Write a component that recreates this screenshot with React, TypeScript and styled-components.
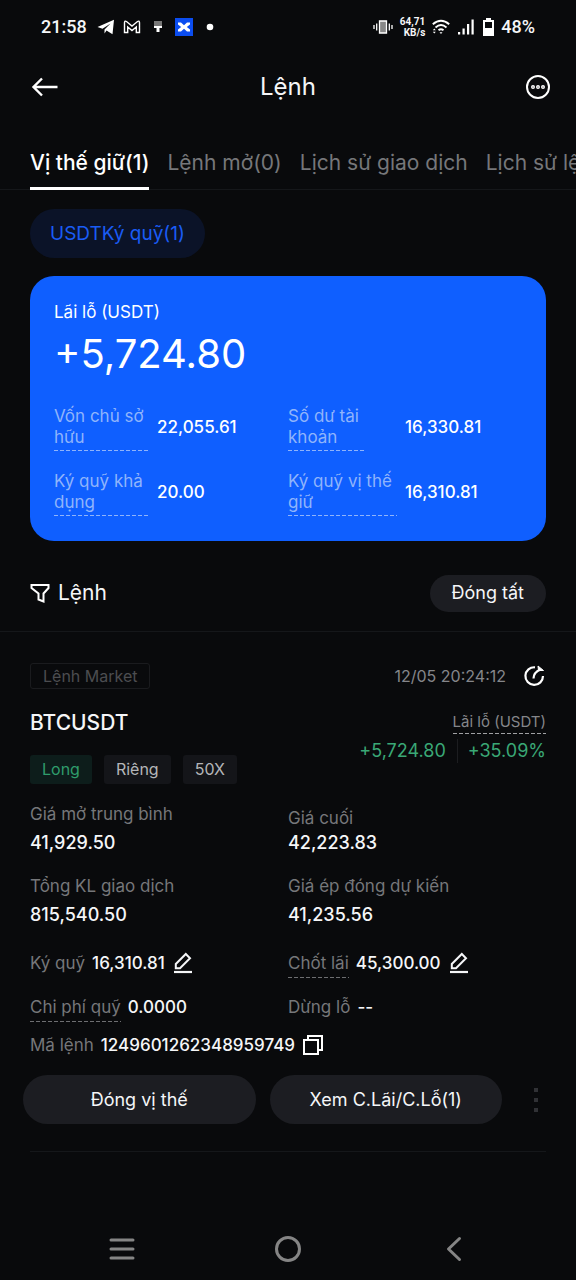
import React from "react";
import styled, { createGlobalStyle } from "styled-components";

const GlobalStyle = createGlobalStyle`
  * { box-sizing: border-box; }
  body {
    margin: 0;
    background: #090a0c;
    color: #f5f6f8;
    font-family: Inter, Roboto, "Liberation Sans", sans-serif;
    font-size: 17px;
    line-height: 24px;
  }
  button { font: inherit; color: inherit; background: none; border: 0; padding: 0; cursor: pointer; }
  dl, dt, dd, h1, h2, p { margin: 0; font-weight: 400; }
  svg { display: block; flex: none; }
`;

const Page = styled.div`
  min-height: 100vh;
  display: flex;
  flex-direction: column;
  overflow: hidden;
`;

const StatusBar = styled.div`
  height: 54px;
  padding: 0 41px;
  display: flex;
  align-items: center;
  justify-content: space-between;
  font-family: Roboto, sans-serif;
  font-size: 18px;
  font-weight: 500;
`;

const StatusGroup = styled.div<{ $gap: number }>`
  display: flex;
  align-items: center;
  gap: ${(p) => p.$gap}px;
`;

const NetSpeed = styled.span`
  font-size: 10px;
  line-height: 11px;
  font-weight: 700;
  text-align: right;
`;

const Header = styled.header`
  height: 66px;
  padding: 0 25px;
  display: grid;
  grid-template-columns: 1fr auto 1fr;
  align-items: center;
`;

const Title = styled.h1`
  font-size: 24px;
  line-height: 32px;
`;

const IconButton = styled.button<{ $end?: boolean }>`
  justify-self: ${(p) => (p.$end ? "end" : "start")};
  && { padding-left: 6px; }
`;

const Tabs = styled.nav`
  height: 70px;
  padding-left: 30px;
  display: flex;
  align-items: flex-end;
  gap: 18px;
  border-bottom: 1px solid #15171a;
`;

const Tab = styled.button<{ $active?: boolean }>`
  flex: none;
  height: 52px;
  margin-bottom: -1px;
  white-space: nowrap;
  && {
    font-size: 21px;
    font-weight: ${(p) => (p.$active ? 500 : 400)};
    color: ${(p) => (p.$active ? "#ffffff" : "#76777a")};
    border-bottom: 3px solid ${(p) => (p.$active ? "#ffffff" : "transparent")};
  }
`;

const Main = styled.main`
  display: flex;
  flex-direction: column;
`;

const Chip = styled.button`
  align-self: flex-start;
  height: 49px;
  margin: 19px 30px 18px;
  border-radius: 25px;
  && {
    padding: 0 20px;
    background: #0b1328;
    color: #1a5cf5;
    font-size: 19px;
  }
`;

const Card = styled.section`
  margin: 0 30px;
  padding: 24px 24px 28px;
  border-radius: 24px;
  background: #0f5fff;
  color: #ffffff;
`;

const CardTitle = styled.h2`
  font-size: 17px;
  line-height: 24px;
`;

const CardAmount = styled.p`
  margin-bottom: 22px;
  font-size: 40px;
  line-height: 60px;
`;

const Balances = styled.dl`
  && { margin-top: 22px; }
  display: grid;
  grid-template-columns: 1fr 1fr;
  row-gap: 23px;
`;

const Balance = styled.div<{ $labelWidth: number }>`
  height: 42px;
  display: grid;
  grid-template-columns: ${(p) => p.$labelWidth}px 1fr;
  align-items: center;
  dt { display: flex; height: 42px; color: #8fb4fb; line-height: 21px; }
  dd { font-weight: 500; }
`;

const Dashed = styled.span<{ $color?: string; $wide?: boolean }>`
  display: inline-block;
  margin-bottom: -3px;
  padding-bottom: 3px;
  padding-right: ${(p) => (p.$wide ? 5 : 0)}px;
  white-space: nowrap;
  background: repeating-linear-gradient(90deg, ${(p) => p.$color ?? "#6d6e71"} 0 4px, transparent 4px 6px) left bottom / 100% 1px no-repeat;
`;

const Toolbar = styled.div`
  height: 91px;
  padding: 14px 30px 0;
  display: flex;
  align-items: center;
  justify-content: space-between;
  border-bottom: 1px solid #15171a;
`;

const FilterButton = styled.button`
  display: flex;
  align-items: center;
  gap: 8px;
  && { font-size: 21px; }
`;

const Pill = styled.button<{ $small?: boolean }>`
  height: ${(p) => (p.$small ? 37 : 49)}px;
  flex: ${(p) => (p.$small ? "none" : "1")};
  border-radius: 25px;
  && {
    padding: 0 ${(p) => (p.$small ? 22 : 8)}px;
    background: #1c1d22;
    font-size: 18px;
  }
`;

const Order = styled.article`
  padding: 30px 30px 0;
`;

const OrderTop = styled.div`
  height: 28px;
  display: flex;
  align-items: center;
  justify-content: space-between;
`;

const TypeTag = styled.span`
  padding: 0 12px;
  border: 1px solid #1a1b1e;
  border-radius: 3px;
  font-size: 16px;
  color: #4c4d50;
`;

const Timestamp = styled.div`
  display: flex;
  align-items: center;
  gap: 17px;
  font-size: 16px;
  color: #85868a;
  button { color: #ffffff; }
`;

const OrderHead = styled.div`
  margin-top: 19px;
  display: flex;
  justify-content: space-between;
`;

const Symbol = styled.h2`
  && { margin-bottom: 18px; font-weight: 500; }
  font-size: 21px;
  line-height: 28px;
`;

const Tags = styled.div`
  display: flex;
  gap: 12px;
`;

const Tag = styled.span<{ $long?: boolean }>`
  padding: 2px 12px 3px;
  border-radius: 3px;
  font-size: 16px;
  background: ${(p) => (p.$long ? "#0d1d1b" : "#141519")};
  color: ${(p) => (p.$long ? "#2f9c6c" : "#b4b5b8")};
`;

const Profit = styled.div`
  padding-top: 3px;
  display: flex;
  flex-direction: column;
  align-items: flex-end;
  gap: 8px;
  color: #85868a;
  font-size: 15px;
  line-height: 19px;
`;

const ProfitValues = styled.div`
  display: flex;
  font-size: 18px;
  line-height: 24px;
  color: #3aa876;
  span + span {
    margin-left: 11px;
    padding-left: 10px;
    border-left: 1px solid #1c1d20;
  }
`;

const Stats = styled.dl`
  && { margin-top: 18px; }
  display: grid;
  grid-template-columns: 1fr 1fr;
  row-gap: 19px;
  dt { color: #76777a; }
  dd { font-size: 18px; font-weight: 500; }
`;

const Stat = styled.div<{ $tight?: boolean }>`
  display: flex;
  flex-direction: column;
  justify-content: flex-end;
  gap: ${(p) => (p.$tight ? 1 : 5)}px;
`;

const Details = styled.dl<{ $top: number }>`
  && { margin-top: ${(p) => p.$top}px; }
  display: grid;
  grid-template-columns: 1fr 1fr;
`;

const Detail = styled.div`
  height: 24px;
  display: flex;
  align-items: flex-start;
  gap: 7px;
  white-space: nowrap;
  dt { color: #76777a; }
  dd { display: flex; align-items: center; gap: 8px; font-weight: 500; }
`;

const Actions = styled.div`
  margin: 18px 0 27px -7px;
  display: flex;
  align-items: center;
  gap: 14px;
`;

const MoreButton = styled.button`
  width: 30px;
  display: flex;
  justify-content: flex-end;
  && { padding-right: 6px; }
`;

const Rule = styled.hr`
  margin: 0;
  border: 0;
  border-top: 1px solid #15171a;
`;

const SystemNav = styled.nav`
  margin-top: auto;
  height: 62px;
  padding: 0 39px;
  display: grid;
  grid-template-columns: 1fr 1fr 1fr;
  justify-items: center;
  align-items: center;
`;

const EditIcon = () => (
  <svg width="20" height="22" viewBox="0 0 20 22" fill="none" stroke="currentColor" strokeWidth="2">
    <path d="M2.800 16.200v-4.200L12.800 2l4.200 4.200L7 16.200z" />
    <path d="M1 20h18" strokeWidth="2.200" />
  </svg>
);

export default function App() {
  return (
    <Page>
      <GlobalStyle />
      <StatusBar>
        <StatusGroup $gap={10}>
          <span>21:58</span>
          <StatusGroup $gap={8}>
            <svg width="18" height="16" viewBox="0 0 18 16" fill="#fff">
              <path d="M0.500 8 17 0.800 15.500 15.200 9.500 11.500 7.500 14.500 7.500 10.500 13.500 4.500 5.500 9.700z" />
            </svg>
            <svg width="18" height="14" viewBox="0 0 18 14" fill="none" stroke="#fff" strokeWidth="1.400">
              <path d="M1.500 12.500V2.500q.2-2 2-1L9 6l5.500-4.500q1.800-1 2 1v10h-3.200V7L9 10.500 4.700 7v5.500z" />
            </svg>
            <svg width="18" height="12" viewBox="-2 0 18 12">
              <path d="M3 0h8v5H3z" fill="#777" />
              <path d="M3 5h8v2H8.500v4h-3V7H3z" fill="#fff" />
            </svg>
            <svg width="18" height="18" viewBox="0 0 18 18">
              <path d="M0 0h18v18H0z" fill="#0b4df0" />
              <path d="M3 4.500h3L9 7.300l3-2.800h3v2L11.800 9l3.200 2.500v2h-3L9 10.700l-3 2.800H3v-2L6.200 9 3 6.500z" fill="#fff" />
            </svg>
            <svg width="18" height="8" viewBox="0 0 18 8">
              <circle cx="9" cy="4" r="3.300" fill="#fff" />
            </svg>
          </StatusGroup>
        </StatusGroup>
        <StatusGroup $gap={7}>
          <svg width="20" height="14" viewBox="0 0 20 14" fill="none" stroke="#fff" strokeWidth="1.300">
            <path d="M6.500 1h7v12h-7z" fill="#888" />
            <path d="M3.700 3.500v7M1 5v4M16.300 3.500v7M19 5v4" />
          </svg>
          <NetSpeed>
            64,71
            <br />
            KB/s
          </NetSpeed>
          <svg width="18" height="16" viewBox="0 0 18 16" fill="none" stroke="#fff" strokeWidth="1.900">
            <path d="M.8 5.200q8.200-7 16.400 0M3.500 8.400q5.500-4.600 11 0M6.500 11.300q2.500-2 5 0" />
            <path d="M7.500 13.300h3L9 15zM.8 11.300h3L2.300 9.500zM.8 12.800h3L2.300 14.600z" fill="#fff" stroke="none" />
          </svg>
          <svg width="18" height="16" viewBox="0 0 18 16" fill="#fff">
            <path d="M1 13h2.200v2.500H1zM5.500 9.500h2.200v6H5.500zM10 5h2.200v10.500H10zM14.500.5h2.200v15h-2.200z" />
          </svg>
          <StatusGroup $gap={6}>
            <svg width="13" height="19" viewBox="0 0 13 19" fill="none">
              <path d="M4 0h5v2H4z" fill="#fff" />
              <path d="M2 3h9v14H2z" stroke="#fff" strokeWidth="2" />
              <path d="M2 10h9v7H2z" fill="#fff" />
            </svg>
            <span>48%</span>
          </StatusGroup>
        </StatusGroup>
      </StatusBar>

      <Header>
        <IconButton aria-label="Quay lại">
          <svg width="28" height="20" viewBox="0 0 28 20" fill="none" stroke="#fff" strokeWidth="2.400">
            <path d="M26.500 10H3M11 1.500 2.500 10l8.500 8.500" />
          </svg>
        </IconButton>
        <Title>Lệnh</Title>
        <IconButton $end aria-label="Thêm">
          <svg width="26" height="26" viewBox="0 0 26 26" fill="none" stroke="#fff">
            <circle cx="13" cy="13" r="11" strokeWidth="2" />
            <g strokeWidth="1.400">
              <circle cx="8" cy="13" r="1.300" />
              <circle cx="13" cy="13" r="1.300" />
              <circle cx="18" cy="13" r="1.300" />
            </g>
          </svg>
        </IconButton>
      </Header>

      <Tabs>
        <Tab $active>Vị thế giữ(1)</Tab>
        <Tab>Lệnh mở(0)</Tab>
        <Tab>Lịch sử giao dịch</Tab>
        <Tab>Lịch sử lệnh</Tab>
      </Tabs>

      <Main>
        <Chip>USDTKý quỹ(1)</Chip>

        <Card>
          <CardTitle>Lãi lỗ (USDT)</CardTitle>
          <CardAmount>+5,724.80</CardAmount>
          <Balances>
            <Balance $labelWidth={103}>
              <dt><Dashed $wide $color="#8fb4fb">Vốn chủ sở<br />hữu</Dashed></dt>
              <dd>22,055.61</dd>
            </Balance>
            <Balance $labelWidth={117}>
              <dt><Dashed $wide $color="#8fb4fb">Số dư tài<br />khoản</Dashed></dt>
              <dd>16,330.81</dd>
            </Balance>
            <Balance $labelWidth={103}>
              <dt><Dashed $wide $color="#8fb4fb">Ký quỹ khả<br />dụng</Dashed></dt>
              <dd>20.00</dd>
            </Balance>
            <Balance $labelWidth={117}>
              <dt><Dashed $wide $color="#8fb4fb">Ký quỹ vị thế<br />giữ</Dashed></dt>
              <dd>16,310.81</dd>
            </Balance>
          </Balances>
        </Card>

        <Toolbar>
          <FilterButton>
            <svg width="20" height="20" viewBox="0 0 20 20" fill="none" stroke="#fff" strokeWidth="2">
              <path d="M1.500 2h17v3l-5 5.500v8l-5-2v-6L1.500 5z" />
            </svg>
            Lệnh
          </FilterButton>
          <Pill $small>Đóng tất</Pill>
        </Toolbar>

        <Order>
          <OrderTop>
            <TypeTag>Lệnh Market</TypeTag>
            <Timestamp>
              <time>12/05 20:24:12</time>
              <button aria-label="Chia sẻ">
                <svg width="23" height="22" viewBox="0 0 23 22" fill="none" stroke="currentColor" strokeWidth="2.200">
                  <path d="M12 2.300A8.800 8.800 0 1 0 20 11" />
                  <path d="M10.500 13.500q0-6 7-9" />
                  <path d="M15 1l5.500 4.500h-5z" fill="currentColor" strokeWidth="1" />
                </svg>
              </button>
            </Timestamp>
          </OrderTop>

          <OrderHead>
            <div>
              <Symbol>BTCUSDT</Symbol>
              <Tags>
                <Tag $long>Long</Tag>
                <Tag>Riêng</Tag>
                <Tag>50X</Tag>
              </Tags>
            </div>
            <Profit>
              <Dashed $color="#a0a1a4">Lãi lỗ (USDT)</Dashed>
              <ProfitValues>
                <span>+5,724.80</span>
                <span>+35.09%</span>
              </ProfitValues>
            </Profit>
          </OrderHead>

          <Stats>
            <Stat>
              <dt>Giá mở trung bình</dt>
              <dd>41,929.50</dd>
            </Stat>
            <Stat $tight>
              <dt>Giá cuối</dt>
              <dd>42,223.83</dd>
            </Stat>
            <Stat>
              <dt>Tổng KL giao dịch</dt>
              <dd>815,540.50</dd>
            </Stat>
            <Stat>
              <dt>Giá ép đóng dự kiến</dt>
              <dd>41,235.56</dd>
            </Stat>
          </Stats>

          <Details $top={24}>
            <Detail>
              <dt>Ký quỹ</dt>
              <dd>
                16,310.81
                <button aria-label="Sửa ký quỹ"><EditIcon /></button>
              </dd>
            </Detail>
            <Detail>
              <dt><Dashed>Chốt lãi</Dashed></dt>
              <dd>
                45,300.00
                <button aria-label="Sửa chốt lãi"><EditIcon /></button>
              </dd>
            </Detail>
          </Details>
          <Details $top={20}>
            <Detail>
              <dt><Dashed>Chi phí quỹ</Dashed></dt>
              <dd>0.0000</dd>
            </Detail>
            <Detail>
              <dt>Dừng lỗ</dt>
              <dd>--</dd>
            </Detail>
          </Details>
          <Details $top={14}>
            <Detail>
              <dt>Mã lệnh</dt>
              <dd>
                1249601262348959749
                <button aria-label="Sao chép">
                  <svg width="20" height="20" viewBox="0 0 20 20" fill="none" stroke="#fff" strokeWidth="2">
                    <path d="M1 5h14v14H1zM5 5V1h14v14h-4" />
                  </svg>
                </button>
              </dd>
            </Detail>
          </Details>

          <Actions>
            <Pill>Đóng vị thế</Pill>
            <Pill>Xem C.Lãi/C.Lỗ(1)</Pill>
            <MoreButton aria-label="Tùy chọn khác">
              <svg width="8" height="24" viewBox="0 0 8 24" fill="#303135">
                <path d="M2 0h4v4H2zM2 10h4v4H2zM2 20h4v4H2z" />
              </svg>
            </MoreButton>
          </Actions>
          <Rule />
        </Order>
      </Main>

      <SystemNav>
        <button aria-label="Ứng dụng gần đây">
          <svg width="26" height="24" viewBox="0 0 26 24" stroke="#858585" strokeWidth="3" strokeLinecap="round">
            <path d="M2 3h22M2 12h22M2 21h22" />
          </svg>
        </button>
        <button aria-label="Màn hình chính">
          <svg width="28" height="28" viewBox="0 0 28 28" fill="none" stroke="#858585" strokeWidth="3">
            <circle cx="14" cy="14" r="11.500" />
          </svg>
        </button>
        <button aria-label="Trở về">
          <svg width="16" height="26" viewBox="0 0 16 26" fill="none" stroke="#858585" strokeWidth="3" strokeLinecap="round" strokeLinejoin="round">
            <path d="M13.500 2.500 2.500 13l11 10.500" />
          </svg>
        </button>
      </SystemNav>
    </Page>
  );
}
